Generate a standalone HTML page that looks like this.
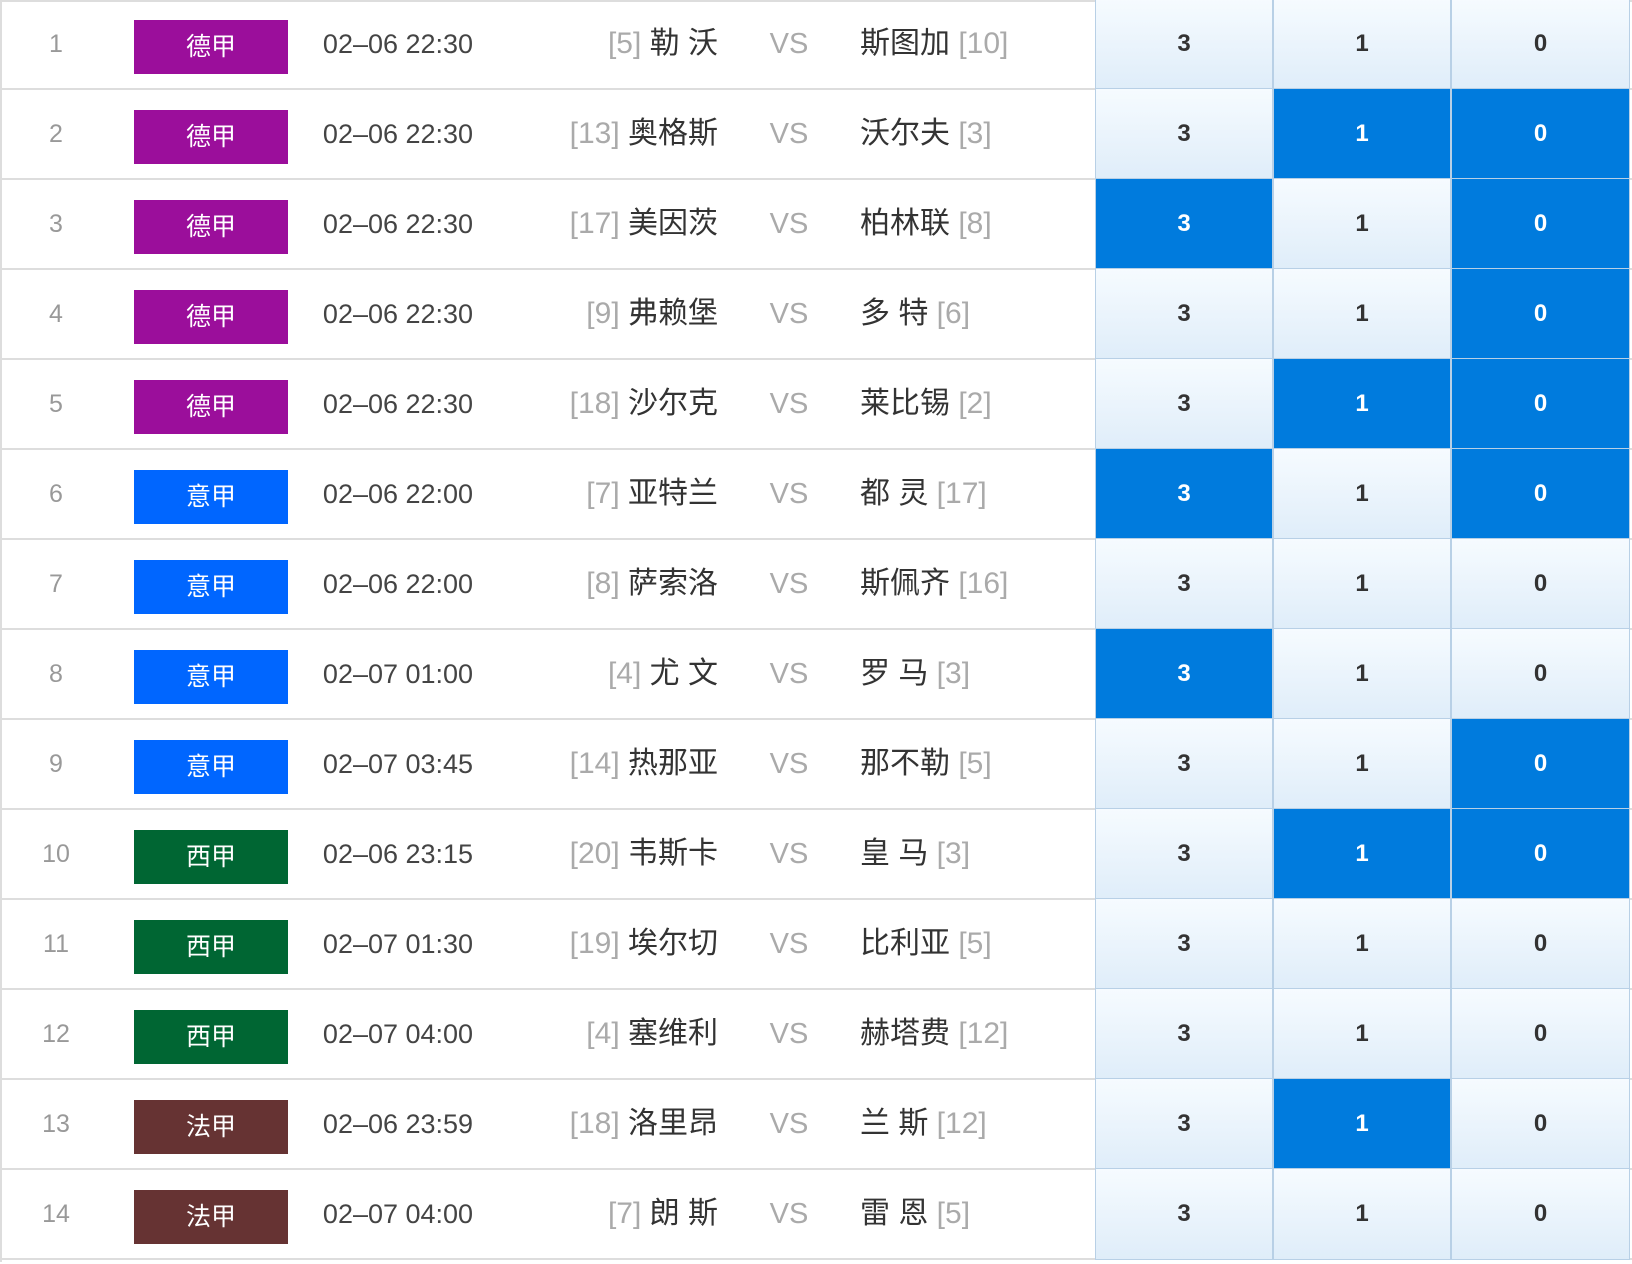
<!DOCTYPE html>
<html><head><meta charset="utf-8"><style>
html,body{margin:0;padding:0;background:#fff;width:1632px;height:1264px;overflow:hidden;font-family:"Liberation Sans","Noto Sans CJK SC",sans-serif}
.t{position:absolute;left:0;top:0;width:1632px;height:1262px;border-top:2px solid #ddd;border-left:2px solid #ddd;box-sizing:border-box}
.r{position:absolute;left:0;width:1632px;height:90px;border-bottom:2px solid #ddd;box-sizing:border-box}
.n{position:absolute;left:16px;width:80px;top:0;line-height:88px;text-align:center;color:#999;font-size:25px}
.b{position:absolute;left:134px;top:20px;width:154px;height:54px;line-height:54px;text-align:center;color:#fff;font-size:25px}
.d{position:absolute;left:300px;width:196px;top:0;line-height:88px;text-align:center;color:#444;font-size:27px}
.h{position:absolute;right:914px;top:0;line-height:88px;color:#333;font-size:30px;white-space:nowrap}
.a{position:absolute;left:860px;top:0;line-height:88px;color:#333;font-size:30px;white-space:nowrap}
.g{color:#aaa}
.v{position:absolute;left:750px;width:78px;text-align:center;top:0;line-height:88px;color:#aaa;font-size:29px}
.o{position:absolute;top:-2px;height:92px;width:178px;box-sizing:border-box;border:1px solid #b8d0e6;background:linear-gradient(#f6fbff,#dfedf9);text-align:center;line-height:90px;font-weight:bold;font-size:24px;color:#333}
.o.s{background:#007bdd;color:#fff;border-color:#b8d0e6}
.o1{left:1095px}.o2{left:1273px}.o3{left:1451px;width:179px}
</style></head><body><div class="t"></div>
<div class="r" style="top:0"><div class="n">1</div><div class="b" style="background:#9b0e9b">德甲</div><div class="d">02–06 22:30</div><div class="h"><span class="g">[5]</span> 勒 沃</div><div class="v">VS</div><div class="a">斯图加 <span class="g">[10]</span></div><div class="o o1">3</div><div class="o o2">1</div><div class="o o3">0</div></div>
<div class="r" style="top:90px"><div class="n">2</div><div class="b" style="background:#9b0e9b">德甲</div><div class="d">02–06 22:30</div><div class="h"><span class="g">[13]</span> 奥格斯</div><div class="v">VS</div><div class="a">沃尔夫 <span class="g">[3]</span></div><div class="o o1">3</div><div class="o o2 s">1</div><div class="o o3 s">0</div></div>
<div class="r" style="top:180px"><div class="n">3</div><div class="b" style="background:#9b0e9b">德甲</div><div class="d">02–06 22:30</div><div class="h"><span class="g">[17]</span> 美因茨</div><div class="v">VS</div><div class="a">柏林联 <span class="g">[8]</span></div><div class="o o1 s">3</div><div class="o o2">1</div><div class="o o3 s">0</div></div>
<div class="r" style="top:270px"><div class="n">4</div><div class="b" style="background:#9b0e9b">德甲</div><div class="d">02–06 22:30</div><div class="h"><span class="g">[9]</span> 弗赖堡</div><div class="v">VS</div><div class="a">多 特 <span class="g">[6]</span></div><div class="o o1">3</div><div class="o o2">1</div><div class="o o3 s">0</div></div>
<div class="r" style="top:360px"><div class="n">5</div><div class="b" style="background:#9b0e9b">德甲</div><div class="d">02–06 22:30</div><div class="h"><span class="g">[18]</span> 沙尔克</div><div class="v">VS</div><div class="a">莱比锡 <span class="g">[2]</span></div><div class="o o1">3</div><div class="o o2 s">1</div><div class="o o3 s">0</div></div>
<div class="r" style="top:450px"><div class="n">6</div><div class="b" style="background:#0066ff">意甲</div><div class="d">02–06 22:00</div><div class="h"><span class="g">[7]</span> 亚特兰</div><div class="v">VS</div><div class="a">都 灵 <span class="g">[17]</span></div><div class="o o1 s">3</div><div class="o o2">1</div><div class="o o3 s">0</div></div>
<div class="r" style="top:540px"><div class="n">7</div><div class="b" style="background:#0066ff">意甲</div><div class="d">02–06 22:00</div><div class="h"><span class="g">[8]</span> 萨索洛</div><div class="v">VS</div><div class="a">斯佩齐 <span class="g">[16]</span></div><div class="o o1">3</div><div class="o o2">1</div><div class="o o3">0</div></div>
<div class="r" style="top:630px"><div class="n">8</div><div class="b" style="background:#0066ff">意甲</div><div class="d">02–07 01:00</div><div class="h"><span class="g">[4]</span> 尤 文</div><div class="v">VS</div><div class="a">罗 马 <span class="g">[3]</span></div><div class="o o1 s">3</div><div class="o o2">1</div><div class="o o3">0</div></div>
<div class="r" style="top:720px"><div class="n">9</div><div class="b" style="background:#0066ff">意甲</div><div class="d">02–07 03:45</div><div class="h"><span class="g">[14]</span> 热那亚</div><div class="v">VS</div><div class="a">那不勒 <span class="g">[5]</span></div><div class="o o1">3</div><div class="o o2">1</div><div class="o o3 s">0</div></div>
<div class="r" style="top:810px"><div class="n">10</div><div class="b" style="background:#006633">西甲</div><div class="d">02–06 23:15</div><div class="h"><span class="g">[20]</span> 韦斯卡</div><div class="v">VS</div><div class="a">皇 马 <span class="g">[3]</span></div><div class="o o1">3</div><div class="o o2 s">1</div><div class="o o3 s">0</div></div>
<div class="r" style="top:900px"><div class="n">11</div><div class="b" style="background:#006633">西甲</div><div class="d">02–07 01:30</div><div class="h"><span class="g">[19]</span> 埃尔切</div><div class="v">VS</div><div class="a">比利亚 <span class="g">[5]</span></div><div class="o o1">3</div><div class="o o2">1</div><div class="o o3">0</div></div>
<div class="r" style="top:990px"><div class="n">12</div><div class="b" style="background:#006633">西甲</div><div class="d">02–07 04:00</div><div class="h"><span class="g">[4]</span> 塞维利</div><div class="v">VS</div><div class="a">赫塔费 <span class="g">[12]</span></div><div class="o o1">3</div><div class="o o2">1</div><div class="o o3">0</div></div>
<div class="r" style="top:1080px"><div class="n">13</div><div class="b" style="background:#663333">法甲</div><div class="d">02–06 23:59</div><div class="h"><span class="g">[18]</span> 洛里昂</div><div class="v">VS</div><div class="a">兰 斯 <span class="g">[12]</span></div><div class="o o1">3</div><div class="o o2 s">1</div><div class="o o3">0</div></div>
<div class="r" style="top:1170px"><div class="n">14</div><div class="b" style="background:#663333">法甲</div><div class="d">02–07 04:00</div><div class="h"><span class="g">[7]</span> 朗 斯</div><div class="v">VS</div><div class="a">雷 恩 <span class="g">[5]</span></div><div class="o o1">3</div><div class="o o2">1</div><div class="o o3">0</div></div>
</body></html>
